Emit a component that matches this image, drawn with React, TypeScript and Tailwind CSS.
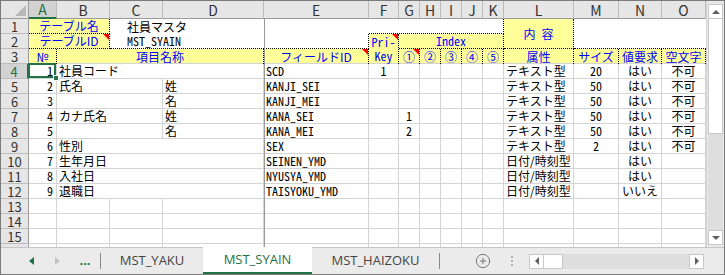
import React from 'react';
import { CirclePlus } from 'lucide-react';

type Cell = { t?: string; span?: number; al?: 'l' | 'c' | 'r'; m?: boolean };

const JP = "[font-family:'Noto_Sans_CJK_JP',sans-serif]";
const MONO = "[font-family:'Noto_Sans_Mono_CJK_JP','Noto_Sans_CJK_JP',monospace]";
const GRID = 'border-r border-b border-[#d4d4d4]';
const YEL = 'relative bg-[#ffff99] text-[#0000ff] text-[12px] leading-[14px] flex items-center justify-center whitespace-nowrap';
const DOT_RB = 'border-r border-b border-dotted border-black';
const DOT_R3 = 'border-r border-dotted border-black shadow-[inset_0_-1px_0_#d4d4d4]';

const COLS = ['A', 'B', 'C', 'D', 'E', 'F', 'G', 'H', 'I', 'J', 'K', 'L', 'M', 'N', 'O'];

const blank5: Cell[] = [{}, {}, {}, {}, {}];

const rows: Cell[][] = [
  [{ t: '1', al: 'r', m: true }, { t: '社員コード', span: 3 }, { t: 'SCD', m: true }, { t: '1', al: 'c', m: true }, ...blank5, { t: 'テキスト型' }, { t: '20', al: 'c', m: true }, { t: 'はい', al: 'c' }, { t: '不可', al: 'c' }],
  [{ t: '2', al: 'r', m: true }, { t: '氏名', span: 2 }, { t: '姓' }, { t: 'KANJI_SEI', m: true }, {}, ...blank5, { t: 'テキスト型' }, { t: '50', al: 'c', m: true }, { t: 'はい', al: 'c' }, { t: '不可', al: 'c' }],
  [{ t: '3', al: 'r', m: true }, { span: 2 }, { t: '名' }, { t: 'KANJI_MEI', m: true }, {}, ...blank5, { t: 'テキスト型' }, { t: '50', al: 'c', m: true }, { t: 'はい', al: 'c' }, { t: '不可', al: 'c' }],
  [{ t: '4', al: 'r', m: true }, { t: 'カナ氏名', span: 2 }, { t: '姓' }, { t: 'KANA_SEI', m: true }, {}, { t: '1', al: 'c', m: true }, {}, {}, {}, {}, { t: 'テキスト型' }, { t: '50', al: 'c', m: true }, { t: 'はい', al: 'c' }, { t: '不可', al: 'c' }],
  [{ t: '5', al: 'r', m: true }, { span: 2 }, { t: '名' }, { t: 'KANA_MEI', m: true }, {}, { t: '2', al: 'c', m: true }, {}, {}, {}, {}, { t: 'テキスト型' }, { t: '50', al: 'c', m: true }, { t: 'はい', al: 'c' }, { t: '不可', al: 'c' }],
  [{ t: '6', al: 'r', m: true }, { t: '性別', span: 3 }, { t: 'SEX', m: true }, {}, ...blank5, { t: 'テキスト型' }, { t: '2', al: 'c', m: true }, { t: 'はい', al: 'c' }, { t: '不可', al: 'c' }],
  [{ t: '7', al: 'r', m: true }, { t: '生年月日', span: 3 }, { t: 'SEINEN_YMD', m: true }, {}, ...blank5, { t: '日付/時刻型' }, {}, { t: 'はい', al: 'c' }, {}],
  [{ t: '8', al: 'r', m: true }, { t: '入社日', span: 3 }, { t: 'NYUSYA_YMD', m: true }, {}, ...blank5, { t: '日付/時刻型' }, {}, { t: 'はい', al: 'c' }, {}],
  [{ t: '9', al: 'r', m: true }, { t: '退職日', span: 3 }, { t: 'TAISYOKU_YMD', m: true }, {}, ...blank5, { t: '日付/時刻型' }, {}, { t: 'いいえ', al: 'c' }, {}],
];

const emptyRow: Cell[] = COLS.map(() => ({}));

const spanCls: Record<number, string> = { 1: '', 2: 'col-span-2', 3: 'col-span-3' };
const alCls = { l: 'pl-[2px]', c: 'text-center', r: 'text-right pr-[3px]' };

const Tri = () => (
  <span className="absolute top-0 right-0 w-0 h-0 border-l-[6px] border-l-transparent border-t-[6px] border-t-[#ff0000]" />
);

function RowHead({ n, active, hideLabel }: { n: number; active?: boolean; hideLabel?: boolean }) {
  return (
    <div
      className={
        active
          ? 'flex items-center justify-center bg-[#d2d2d2] text-[#217346] text-[13px] leading-[13px] border-b border-b-[#bcbcbc] border-r-2 border-r-[#217346]'
          : 'flex items-center justify-center bg-[#e6e6e6] text-[#333] text-[13px] leading-[13px] border-b border-b-[#bcbcbc] border-r border-r-[#9b9b9b]'
      }
    >
      {hideLabel ? '' : n}
    </div>
  );
}

function DataRow({ n, cells }: { n: number; cells: Cell[] }) {
  return (
    <>
      <RowHead n={n} active={n === 4} hideLabel={n > 15} />
      {cells.map((c, i) => (
        <div
          key={i}
          className={`${GRID} ${spanCls[c.span || 1]} ${alCls[c.al || 'l']} ${c.m ? MONO : ''} relative text-[12px] leading-[14px] whitespace-nowrap text-black`}
        >
          {c.t}
          {n === 4 && i === 0 && (
            <>
              <span className="absolute -left-px -top-px right-0 bottom-0 border-2 border-[#217346] z-10" />
              <span className="absolute -right-[3px] -bottom-[3px] w-[6px] h-[6px] bg-[#217346] border border-white z-20" />
            </>
          )}
        </div>
      ))}
    </>
  );
}

function ScrollBtn({ dir }: { dir: 'up' | 'down' | 'left' | 'right' }) {
  const arrow = {
    up: 'border-l-[4px] border-r-[4px] border-b-[4px] border-l-transparent border-r-transparent border-b-[#606060]',
    down: 'border-l-[4px] border-r-[4px] border-t-[4px] border-l-transparent border-r-transparent border-t-[#606060]',
    left: 'border-t-[4px] border-b-[4px] border-r-[4px] border-t-transparent border-b-transparent border-r-[#606060]',
    right: 'border-t-[4px] border-b-[4px] border-l-[4px] border-t-transparent border-b-transparent border-l-[#606060]',
  }[dir];
  return (
    <div className="w-[15px] h-[15px] bg-white border border-[#c8c8c8] flex items-center justify-center shrink-0">
      <span className={`w-0 h-0 ${arrow}`} />
    </div>
  );
}

export default function App() {
  return (
    <div className={`w-[725px] h-[275px] border border-[#7a7a7a] bg-white overflow-hidden ${JP}`}>
      <div className="flex h-[246px]">
        <div className="relative w-[705px] h-[246px] overflow-hidden">
          <div className="grid grid-cols-[28px_28px_53px_53px_101px_105px_30px_21px_21px_21px_21px_21px_70px_45px_43px_44px] grid-rows-[18px_repeat(16,15px)]">
            {/* column headers */}
            <div className="relative bg-[#e6e6e6] border-r border-r-[#9b9b9b] border-b border-b-[#9b9b9b]">
              <span className="absolute right-[2px] bottom-[2px] w-0 h-0 border-l-[11px] border-l-transparent border-b-[11px] border-b-[#b8b8b8]" />
            </div>
            {COLS.map((c) => (
              <div
                key={c}
                className={
                  c === 'A'
                    ? 'flex items-center justify-center bg-[#d2d2d2] text-[#217346] text-[14px] leading-[14px] border-r border-r-[#bcbcbc] border-b-2 border-b-[#217346]'
                    : 'flex items-center justify-center bg-[#e6e6e6] text-[#333] text-[14px] leading-[14px] border-r border-r-[#bcbcbc] border-b border-b-[#9b9b9b]'
                }
              >
                {c}
              </div>
            ))}

            {/* row 1 */}
            <RowHead n={1} />
            <div className={`${YEL} ${DOT_RB} col-span-2`}>テーブル名</div>
            <div className="col-span-2 text-[12px] leading-[14px] pl-[17px] flex items-center">社員マスタ</div>
            <div />
            <div className="col-span-6 border-r border-b border-dotted border-black" />
            <div className={`${YEL} ${DOT_RB} row-span-2 whitespace-pre ${MONO}`}>内 容</div>
            <div className="col-span-3" />

            {/* row 2 */}
            <RowHead n={2} />
            <div className={`${YEL} ${DOT_RB} col-span-2`}>
              テーブルID
              <Tri />
            </div>
            <div className={`col-span-2 border-b border-dotted border-black text-[12px] leading-[14px] pl-[17px] flex items-center ${MONO}`}>MST_SYAIN</div>
            <div className="border-r border-b border-dotted border-black" />
            <div className={`${YEL} ${DOT_R3} row-span-2 flex-col ${MONO}`}>
              <span>Pri-</span>
              <span>Key</span>
              <Tri />
            </div>
            <div className={`${YEL} ${DOT_RB} col-span-5 ${MONO}`}>Index</div>
            <div className="col-span-3 border-b border-dotted border-black" />

            {/* row 3 */}
            <RowHead n={3} />
            <div className={`${YEL} ${DOT_R3}`}>№</div>
            <div className={`${YEL} ${DOT_R3} col-span-3`}>項目名称</div>
            <div className={`${YEL} ${DOT_R3}`}>
              フィールドID
              <Tri />
            </div>
            <div className={`${YEL} ${DOT_R3}`}>
              ①
              <Tri />
            </div>
            <div className={`${YEL} ${DOT_R3}`}>②</div>
            <div className={`${YEL} ${DOT_R3}`}>③</div>
            <div className={`${YEL} ${DOT_R3}`}>④</div>
            <div className={`${YEL} ${DOT_R3}`}>⑤</div>
            <div className={`${YEL} ${DOT_R3}`}>属性</div>
            <div className={`${YEL} ${DOT_R3}`}>サイズ</div>
            <div className={`${YEL} ${DOT_R3}`}>値要求</div>
            <div className={`${YEL} ${DOT_R3}`}>空文字</div>

            {rows.map((r, i) => (
              <DataRow key={i} n={i + 4} cells={r} />
            ))}
            {[13, 14, 15, 16].map((n) => (
              <DataRow key={n} n={n} cells={emptyRow} />
            ))}
          </div>
          {/* frozen pane line */}
          <div className="absolute left-[263px] top-[18px] bottom-0 w-px bg-[#9a9a9a]" />
        </div>

        {/* vertical scrollbar */}
        <div className="w-[18px] h-[246px] bg-[#e9e9e9] border-l border-[#d4d4d4] flex flex-col items-center pt-[3px] pb-[2px]">
          <ScrollBtn dir="up" />
          <div className="w-[15px] h-[115px] bg-white border border-[#c8c8c8] border-t-0" />
          <div className="flex-1 w-[15px] bg-[#dedede]" />
          <ScrollBtn dir="down" />
        </div>
      </div>

      {/* sheet tab bar */}
      <div className="flex items-stretch h-[27px] bg-[#ebebeb] border-t border-[#c6c6c6] text-[13px] [font-family:'Open_Sans','Noto_Sans',sans-serif]">
        <div className="w-[17px]" />
        <div className="w-[26px] flex items-center justify-center">
          <span className="w-0 h-0 border-t-[4px] border-b-[4px] border-r-[5px] border-t-transparent border-b-transparent border-r-[#217346]" />
        </div>
        <div className="w-[26px] flex items-center justify-center">
          <span className="w-0 h-0 border-t-[4px] border-b-[4px] border-l-[5px] border-t-transparent border-b-transparent border-l-[#c4c4c4]" />
        </div>
        <div className="w-[30px] flex items-center justify-center text-[#217346] font-bold text-[13px] leading-none pb-[2px]">...</div>
        <div className="w-px my-[5px] bg-[#8a8a8a]" />
        <div className="w-[102px] flex items-center justify-center text-[#444]">MST_YAKU</div>
        <div className="w-[109px] flex items-center justify-center bg-white text-[#217346] border-b-2 border-[#217346] -mt-px">MST_SYAIN</div>
        <div className="w-[127px] flex items-center justify-center text-[#444]">MST_HAIZOKU</div>
        <div className="w-px my-[5px] bg-[#8a8a8a]" />
        <div className="w-[35px]" />
        <div className="flex items-center">
          <CirclePlus size={16} strokeWidth={1.4} color="#6f6f6f" />
        </div>
        <div className="w-[20px]" />
        <div className="flex flex-col justify-center gap-[2px]">
          <span className="w-[2px] h-[2px] bg-[#b0b0b0]" />
          <span className="w-[2px] h-[2px] bg-[#b0b0b0]" />
          <span className="w-[2px] h-[2px] bg-[#b0b0b0]" />
        </div>
        <div className="w-[16px]" />
        <div className="w-[175px] flex items-center">
          <ScrollBtn dir="left" />
          <div className="w-[19px] h-[15px] bg-white border border-[#c8c8c8] border-l-0" />
          <div className="flex-1 h-[15px] bg-[#dedede]" />
          <ScrollBtn dir="right" />
        </div>
      </div>
    </div>
  );
}
